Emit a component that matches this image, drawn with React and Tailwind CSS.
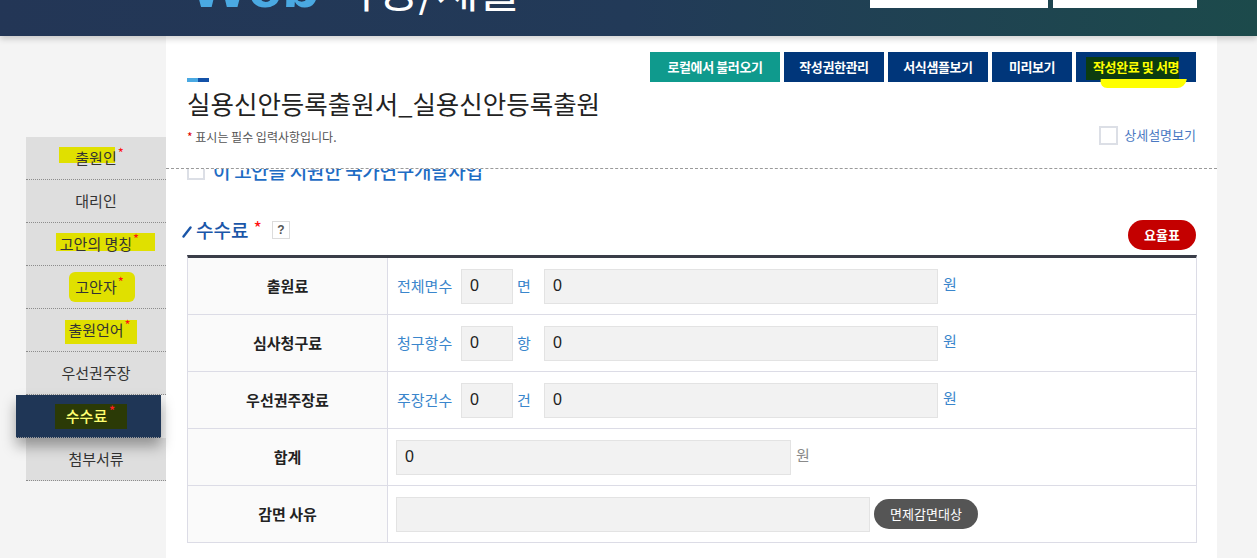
import React from 'react';

const SideMenu = [
    { id: 1, name: "출원인", req: true, hl: "left-[33px] top-[10px] w-[56px] h-[16px]" },
    { id: 2, name: "대리인" },
    { id: 3, name: "고안의 명칭", req: true, hl: "left-[30px] top-[10px] w-[99px] h-[18px]" },
    { id: 4, name: "고안자", req: true, hl: "left-[43px] top-[6px] w-[66px] h-[30px] rounded-[6px]" },
    { id: 5, name: "출원언어", req: true, hl: "left-[39px] top-[11px] w-[72px] h-[24px]" },
    { id: 6, name: "우선권주장" },
    { id: 7, name: "수수료", req: true, active: true },
    { id: 8, name: "첨부서류" },
];

const TopButtons = [
    { id: 1, name: "로컬에서 불러오기", cls: "w-[130px] bg-[#0f9a8d]" },
    { id: 2, name: "작성권한관리", cls: "w-[100px] bg-[#00367a]" },
    { id: 3, name: "서식샘플보기", cls: "w-[100px] bg-[#00367a]" },
    { id: 4, name: "미리보기", cls: "w-[80px] bg-[#00367a]" },
];

const FeeRows = [
    { id: 1, title: "출원료", label: "전체면수", unit: "면" },
    { id: 2, title: "심사청구료", label: "청구항수", unit: "항" },
    { id: 3, title: "우선권주장료", label: "주장건수", unit: "건" },
];

const Box = ({ className = "", value }) => (
    <div className={`h-[35px] bg-[#f2f2f2] border border-[#e3e3e3] flex items-center pl-[8px] text-[16px] text-[#222] font-['Liberation_Sans',sans-serif] ${className}`}>
        {value}
    </div>
);

const App = () => {
    return (
        <div className="w-[1257px] h-[558px] overflow-hidden bg-[#f4f4f4] font-['Noto_Sans_CJK_KR',sans-serif]">
            {/* Header (scrolled, only the bottom is visible) */}
            <header className="h-[36px] overflow-hidden bg-gradient-to-r from-[#233656] via-[#223a58] to-[#1c4a4b] relative z-10 shadow-[0_3px_6px_rgba(0,0,0,0.18)]">
                <div className="flex items-start">
                    <div className="ml-[190px] mt-[-45px] flex items-baseline leading-none whitespace-nowrap">
                        <span className="text-[62px] font-bold text-[#4aa9e2] font-['Liberation_Sans',sans-serif]">Web</span>
                        <span className="ml-[14px] text-[46px] text-white">작성/제출</span>
                    </div>
                    <div className="ml-auto mr-[60px] flex gap-[5px]">
                        <div className="w-[178px] h-[8px] bg-white"></div>
                        <div className="w-[144px] h-[8px] bg-white"></div>
                    </div>
                </div>
            </header>

            <div className="flex">
                {/* Left Menu */}
                <aside className="w-[166px] pt-[101px] shrink-0">
                    <ul>
                        {SideMenu.map((m) => (
                            m.active ? (
                                <li key={m.id} className="relative z-10 ml-[16px] w-[145px] h-[43px] bg-[#1f3656] shadow-[0_8px_14px_rgba(0,0,0,0.35)] border-b border-dotted border-[#999] flex items-center justify-center">
                                    <span className="absolute left-[39px] top-[9px] w-[72px] h-[25px] bg-[#2b3a06]"></span>
                                    <span className="relative text-[15px] text-[#ffff70] font-medium pr-[4px]">
                                        {m.name}<span className="absolute -top-[4px] right-[-4px] text-[#ff2020] text-[13px]">*</span>
                                    </span>
                                </li>
                            ) : (
                                <li key={m.id} className="relative ml-[26px] w-[140px] h-[43px] bg-[#dedede] border-b border-dotted border-[#8c8c8c] flex items-center justify-center">
                                    {m.hl && <span className={`absolute bg-[#e0e000] ${m.hl}`}></span>}
                                    <span className="relative text-[15px] text-[#333]">
                                        {m.name}{m.req && <span className="absolute -top-[4px] right-[-7px] text-[#ff1010] text-[13px]">*</span>}
                                    </span>
                                </li>
                            )
                        ))}
                    </ul>
                </aside>

                {/* Main panel */}
                <main className="w-[1051px] h-[522px] bg-white shrink-0 flex flex-col overflow-hidden">
                    {/* Sticky title area */}
                    <div className="px-[21px] pt-[16px] h-[133px] border-b border-dashed border-[#9a9a9a] shrink-0">
                        <div className="flex justify-end gap-[4px] tracking-[-0.4px]">
                            {TopButtons.map((b) => (
                                <button key={b.id} className={`h-[30px] text-white text-[13px] font-bold ${b.cls}`}>{b.name}</button>
                            ))}
                            <button className="relative w-[120px] h-[30px] bg-[#00367a] text-[13px] font-bold">
                                <span className="absolute left-[10px] top-[5px] w-[93px] h-[23px] bg-[#0c3c10]"></span>
                                <span className="absolute left-[24px] top-[27px] w-[86px] h-[9px] bg-[#ffff00] rounded-b-[8px] skew-x-[-10deg]"></span>
                                <span className="relative text-[#ffff00]">작성완료 및 서명</span>
                            </button>
                        </div>
                        <div className="mt-[-4px] flex">
                            <span className="w-[11px] h-[4px] bg-[#4aa9e2]"></span>
                            <span className="w-[11px] h-[4px] bg-[#1351a8]"></span>
                        </div>
                        <h1 className="mt-[4px] text-[25.5px] leading-[34px] text-[#222]">실용신안등록출원서_실용신안등록출원</h1>
                        <div className="mt-[8px] flex items-center justify-between">
                            <p className="text-[12px] text-[#555]"><span className="text-[#e00000]">*</span> 표시는 필수 입력사항입니다.</p>
                            <label className="flex items-center gap-[6px] mt-[-4px]">
                                <span className="w-[19px] h-[19px] border-2 border-[#dcdfe6] bg-white"></span>
                                <span className="text-[13px] text-[#4a78c2]">상세설명보기</span>
                            </label>
                        </div>
                    </div>

                    {/* Scrolling content */}
                    <div className="flex-1 overflow-hidden px-[21px]">
                        <div className="mt-[-10px] flex items-center gap-[8px] h-[24px]">
                            <span className="w-[18px] h-[18px] border-2 border-[#dcdfe6] bg-white"></span>
                            <span className="text-[19px] font-medium text-[#1e6cc4] tracking-[-0.3px]">이 고안을 지원한 국가연구개발사업</span>
                        </div>

                        <div className="mt-[37px] h-[30px] flex items-end justify-between">
                            <div className="flex items-center mb-[11px]">
                                <svg width="10" height="12" viewBox="0 0 10 12" className="ml-[-5px] mr-[4px] mt-[4px]">
                                    <path d="M1.5 10.5 L8.5 1.5" stroke="#1a56a8" strokeWidth="2.4" strokeLinecap="round" />
                                </svg>
                                <h2 className="text-[19px] font-medium text-[#1a56a8] leading-none">수수료</h2>
                                <span className="ml-[5px] text-[#ff1010] text-[18px] leading-none mt-[-6px]">*</span>
                                <span className="ml-[10px] w-[18px] h-[18px] border border-[#dcdcdc] flex items-center justify-center text-[12px] font-bold text-[#555] font-['Liberation_Sans',sans-serif]">?</span>
                            </div>
                            <button className="w-[68px] h-[30px] rounded-full bg-[#c40000] text-white text-[13px] font-bold">요율표</button>
                        </div>

                        {/* Fee table */}
                        <div className="mt-[5px] w-[1010px] border-t-[3px] border-[#3a3d48] border-l border-r border-r-[#dcdce6] border-l-[#dcdce6]">
                            {FeeRows.map((r) => (
                                <div key={r.id} className="flex h-[57px] border-b border-[#dcdce6]">
                                    <div className="w-[200px] bg-[#fafafa] border-r border-[#dcdce6] flex items-center justify-center text-[15px] font-bold text-[#222]">{r.title}</div>
                                    <div className="flex-1 flex items-center pl-[9px] text-[15px] text-[#3a86cc]">
                                        <span className="w-[64px]">{r.label}</span>
                                        <Box className="w-[52px]" value="0" />
                                        <span className="ml-[4px] w-[27px]">{r.unit}</span>
                                        <Box className="w-[394px]" value="0" />
                                        <span className="ml-[5px] mt-[-4px]">원</span>
                                    </div>
                                </div>
                            ))}
                            <div className="flex h-[57px] border-b border-[#dcdce6]">
                                <div className="w-[200px] bg-[#fafafa] border-r border-[#dcdce6] flex items-center justify-center text-[15px] font-bold text-[#222]">합계</div>
                                <div className="flex-1 flex items-center pl-[8px] text-[15px]">
                                    <Box className="w-[395px]" value="0" />
                                    <span className="ml-[5px] mt-[-4px] text-[#8a8a8a]">원</span>
                                </div>
                            </div>
                            <div className="flex h-[57px] border-b border-[#dcdce6]">
                                <div className="w-[200px] bg-[#fafafa] border-r border-[#dcdce6] flex items-center justify-center text-[15px] font-bold text-[#222]">감면 사유</div>
                                <div className="flex-1 flex items-center pl-[8px]">
                                    <Box className="w-[474px]" value="" />
                                    <button className="ml-[4px] w-[104px] h-[30px] rounded-full bg-[#555] text-white text-[13px]">면제감면대상</button>
                                </div>
                            </div>
                        </div>
                    </div>
                </main>
            </div>
        </div>
    );
};

export default App;
